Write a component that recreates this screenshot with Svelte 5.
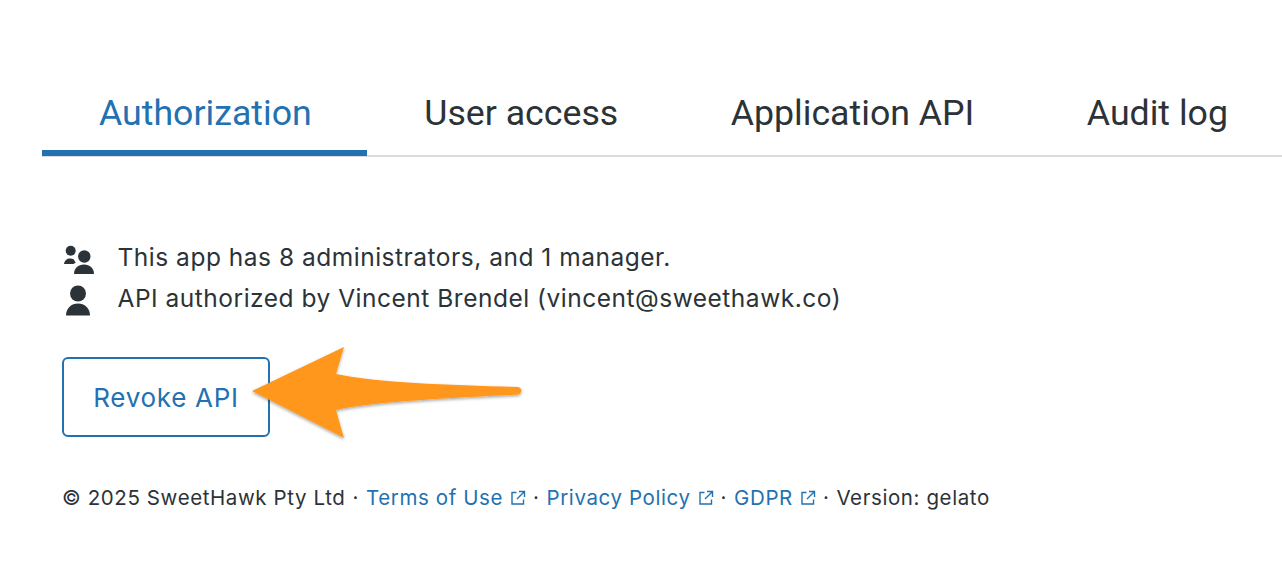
<script>
	let tabs = ['Authorization', 'User access', 'Application API', 'Audit log'];
	let active = 'Authorization';
</script>

<div class="page">
	<nav class="tabs">
		{#each tabs as tab}
			<button class="tab" class:active={tab === active} onclick={() => (active = tab)}>{tab}</button>
		{/each}
	</nav>

	<section class="content">
		<ul class="info">
			<li>
				<svg class="icon" viewBox="0 0 32 32" aria-hidden="true">
					<circle cx="8.700" cy="8.700" r="5" />
					<circle cx="22.300" cy="14.500" r="6.200" />
					<path d="M2 22C2.500 18.500 5 16.500 8 16.500c1.500 0 2.800.3 3.900 1 .4 1.200 1.100 2.300 2 3.100-.9.400-1.700.9-2.400 1.400H2z" />
					<path d="M12 32c0-5.800 4.300-9.500 10-9.500S32 26.200 32 32H12z" />
				</svg>
				<span>This app has 8 administrators, and 1 manager.</span>
			</li>
			<li>
				<svg class="icon" viewBox="0 0 32 32" aria-hidden="true">
					<circle cx="16" cy="10.500" r="8" />
					<path d="M4 32.500c0-7.500 5.500-12 12-12s12 4.500 12 12H4z" />
				</svg>
				<span>API authorized by Vincent Brendel (vincent@sweethawk.co)</span>
			</li>
		</ul>

		<div class="action">
			<button class="revoke">Revoke API</button>
			<svg class="arrow" viewBox="0 0 290 110" aria-hidden="true">
				<defs>
					<filter id="arrow-shadow" x="-10%" y="-10%" width="120%" height="130%">
						<feDropShadow dx="0" dy="1.500" stdDeviation="1.500" flood-color="#000" flood-opacity="0.35" />
					</filter>
				</defs>
				<path
					filter="url(#arrow-shadow)"
					fill="#ff971d"
					d="M4 45 L96 1 L88 28 C130 37 200 39 270 41 C274 41.500 275 47 270 48.500 C210 52 130 55 88 64 L96 92 Z"
				/>
			</svg>
		</div>

		<footer class="foot">
			<span>© 2025 SweetHawk Pty Ltd</span>
			<span class="dot">·</span>
			{#each ['Terms of Use', 'Privacy Policy', 'GDPR'] as link}
				<a href="#top">{link}<svg class="ext" viewBox="0 0 16 16" aria-hidden="true">
						<path d="M6.500 2.500H2v11.500h11.500V9.500M9 1.500h5.500V7M14.500 1.500L7 9" />
					</svg></a>
				<span class="dot">·</span>
			{/each}
			<span>Version: gelato</span>
		</footer>
	</section>
</div>

<style>
	:global(body) {
		background: #fff;
		font-family: Inter, "Liberation Sans", sans-serif;
		color: #2c3338;
	}

	.page {
		padding: 88px 0 0 42px;
		height: 586px;
		box-sizing: border-box;
		overflow: hidden;
	}

	.tabs {
		display: flex;
		border-bottom: 2px solid #dcdcde;
	}

	.tab {
		background: none;
		border: none;
		font-family: Roboto, Inter, sans-serif;
		font-size: 35.700px;
		line-height: 50px;
		color: #2c3338;
		padding: 0 55.500px 12px 57px;
		margin-bottom: -1px;
		border-bottom: 6px solid transparent;
		white-space: nowrap;
		flex: none;
		cursor: pointer;
	}

	.tab.active {
		color: #2271b1;
		border-bottom-color: #2271b1;
	}

	.content {
		padding: 80px 0 0 20px;
	}

	.info {
		list-style: none;
		margin: 0;
		padding: 0;
		font-size: 24.500px;
		letter-spacing: 0.510px;
		line-height: 41px;
	}

	.info li {
		display: flex;
		align-items: center;
		gap: 23.500px;
	}

	.icon {
		width: 32px;
		height: 32px;
		fill: #2c3338;
		flex: none;
		overflow: visible;
	}

	.action {
		position: relative;
		margin-top: 38px;
		width: 208px;
	}

	.revoke {
		display: block;
		width: 208px;
		height: 80px;
		background: #fff;
		border: 2px solid #2271b1;
		border-radius: 6px;
		color: #2271b1;
		font-family: inherit;
		font-size: 26px;
		letter-spacing: 0.700px;
		cursor: pointer;
		padding: 0;
	}

	.arrow {
		position: absolute;
		left: 186px;
		top: -11px;
		width: 290px;
		height: 110px;
	}

	.foot {
		display: flex;
		gap: 7px;
		align-items: center;
		margin-top: 46px;
		font-size: 20.500px;
		letter-spacing: 0.600px;
		line-height: 30px;
		white-space: nowrap;
	}

	.foot a {
		color: #2271b1;
		text-decoration: none;
		display: inline-flex;
		align-items: center;
		gap: 7px;
	}

	.ext {
		width: 16px;
		height: 16px;
		fill: none;
		stroke: #2271b1;
		stroke-width: 1.400;
	}
</style>
